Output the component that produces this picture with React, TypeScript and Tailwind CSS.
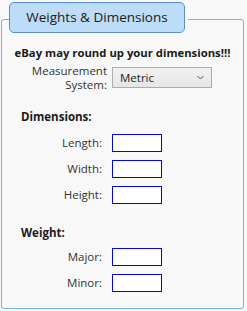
import React from 'react';

const FieldRow: React.FC<{ label: string }> = ({ label }) => (
  <div className="flex items-center h-[18px] mt-[8px]">
    <span className="w-[100px] text-right text-[11.5px] leading-[18px] text-[#333333]">{label}</span>
    <input type="text" className="ml-[10px] w-[50px] h-[18px] border-[1.5px] border-[#0000ff] bg-white outline-none" />
  </div>
);

const App: React.FC = () => {
  return (
    <div className="w-[247px] h-[311px] bg-[#f8f8f8] pt-[19px] pl-[1px] font-['Segoe_UI','Open_Sans',sans-serif] text-[#1a1a1a]">
      <div className="relative w-[243px] h-[290px] border border-[#6fb6f0] rounded-[3px]">
        {/* Header tab */}
        <div className="absolute left-[7px] -top-[18px] pr-[3px] bg-[#f8f8f8]">
          <div className="w-[176px] h-[31px] flex items-center justify-center bg-[#bddcf7] border border-[#5a8ed3] rounded-[5px] text-[13.5px] text-[#1a1a1a]">
            Weights &amp; Dimensions
          </div>
        </div>

        <div className="mt-[24px] h-[18px] text-center text-[11.3px] leading-[18px] font-bold">
          eBay may round up your dimensions!!!
        </div>

        {/* Measurement system */}
        <div className="flex items-center h-[21px] mt-[5px]">
          <span className="w-[105px] text-right text-[11.5px] leading-[14px] text-[#333333]">
            Measurement<br />System:
          </span>
          <div className="ml-[5px] w-[100px] h-[21px] flex items-center justify-between pl-[7px] pr-[7px] border border-[#acacac] bg-gradient-to-b from-[#f2f2f2] to-[#e6e6e6] text-[11.5px] text-[#222222]">
            <span>Metric</span>
            <svg width="7" height="5" viewBox="0 0 7 5" fill="none">
              <path d="M0.5 1 L3.5 4 L6.5 1" stroke="#555555" strokeWidth="1" />
            </svg>
          </div>
        </div>

        <div className="mt-[20px] pl-[19px] h-[18px] text-[11.5px] leading-[18px] font-bold">Dimensions:</div>
        <FieldRow label="Length:" />
        <FieldRow label="Width:" />
        <FieldRow label="Height:" />

        <div className="mt-[20px] pl-[19px] h-[18px] text-[11.5px] leading-[18px] font-bold">Weight:</div>
        <div className="-mt-[2px]">
          <FieldRow label="Major:" />
          <FieldRow label="Minor:" />
        </div>
      </div>
    </div>
  );
};

export default App;
